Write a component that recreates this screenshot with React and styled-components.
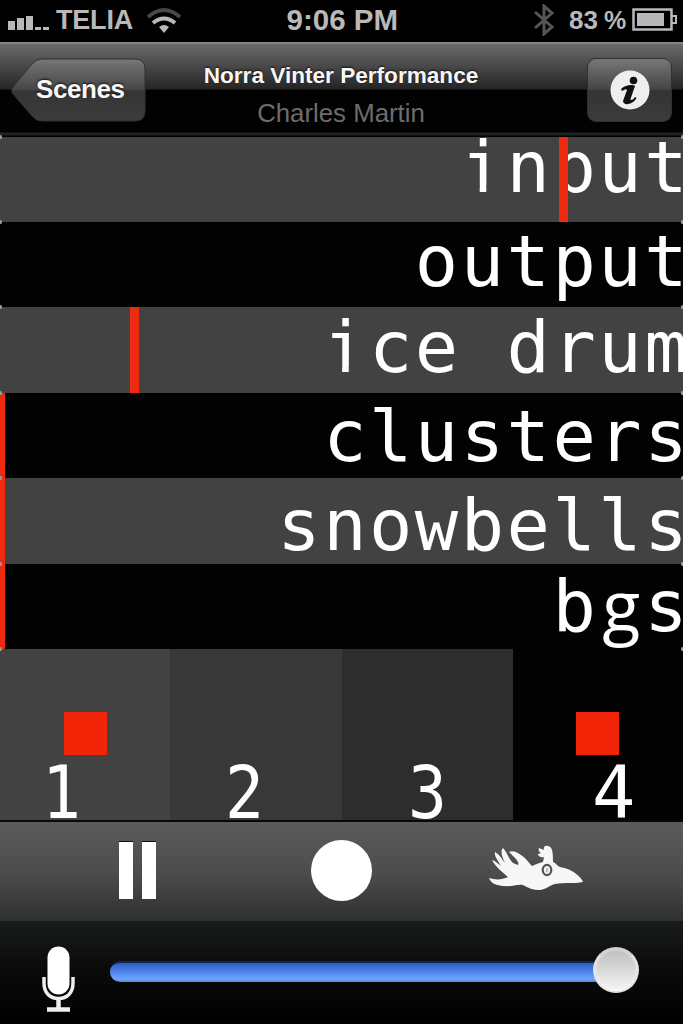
import React from 'react';
import styled, { createGlobalStyle } from 'styled-components';

const Global = createGlobalStyle`
  * { box-sizing: border-box; }
  body { margin: 0; background: #000; }
`;

const Screen = styled.main`
  width: 683px;
  height: 1024px;
  overflow: hidden;
  display: flex;
  flex-direction: column;
  background: #000;
  font-family: "Liberation Sans", Arial, sans-serif;
`;

const StatusBar = styled.header`
  height: 42px;
  flex: none;
  display: grid;
  grid-template-columns: 1fr auto 1fr;
  align-items: center;
  padding: 0 5px 2px 8px;
  color: #b9b9b9;
  font-size: 27px;
  font-weight: bold;
`;

const StatusGroup = styled.div`
  display: flex;
  align-items: center;
  justify-content: ${(p) => (p.$end ? 'flex-end' : 'flex-start')};
  svg { display: block; flex: none; }
`;

const StatusText = styled.span`
  display: block;
  white-space: nowrap;
  font-size: ${(p) => p.$size}px;
  width: ${(p) => p.$width}px;
  margin-left: ${(p) => p.$gap || 0}px;
  letter-spacing: ${(p) => p.$track || 0}px;
`;

const NavBar = styled.nav`
  height: 95px;
  flex: none;
  display: grid;
  grid-template-columns: 137px 1fr 85px;
  align-items: start;
  padding: 14px 11px 0 9px;
  border-top: 2px solid #858585;
  border-bottom: 1px solid #000;
  background: linear-gradient(#6a6a6a 0, #252525 45px, #020202 46px, #020202 88px, #242424 89px, #202020 91px, #000 92px);
`;

const BackButton = styled.button`
  width: 137px;
  height: 64px;
  padding: 0;
  border: 0;
  background: none;
  display: grid;
  svg, span { grid-area: 1 / 1; }
  span {
    align-self: center;
    padding: 0 0 2px 27px;
    text-align: left;
    color: #f7f7f7;
    font: bold 26px/30px "Liberation Sans", Arial, sans-serif;
    letter-spacing: -0.4px;
    text-shadow: 0 -1px 2px #111;
  }
`;

const Titles = styled.div`
  display: flex;
  flex-direction: column;
  align-items: center;
  padding: 4px 51px 0 0;
  white-space: nowrap;
`;

const Title = styled.h1`
  margin: 0;
  color: #f7f7f7;
  font-size: 22.6px;
  line-height: 28px;
  text-shadow: 0 -1px 2px #111;
`;

const Subtitle = styled.p`
  margin: 8px 0 0;
  color: #6c6c6c;
  font-size: 25.8px;
  line-height: 30px;
`;

const InfoButton = styled.button`
  width: 85px;
  height: 64px;
  padding: 0;
  display: grid;
  place-items: center;
  border: 1px solid #303030;
  border-radius: 9px;
  background: linear-gradient(#787878, #454545 48%, #333 52%, #3c3c3c);
`;

const Track = styled.section`
  height: ${(p) => p.$height}px;
  flex: none;
  position: relative;
  display: flex;
  justify-content: flex-end;
  background: ${(p) => (p.$lit ? '#424242' : '#020202')};
`;

const TrackName = styled.span`
  margin: ${(p) => p.$shift}px -7px 0 0;
  color: #fff;
  font-family: "DejaVu Sans Mono", monospace;
  font-size: 72px;
  line-height: 85px;
  letter-spacing: 2.5px;
  white-space: pre;
`;

/* The dotted i loses the foot on both sides of its stem. */
const FootlessI = styled.span`
  display: inline-block;
  line-height: 85px;
  clip-path: polygon(0 0, 100% 0, 100% 61px, 25.6px 61px, 25.6px 100%, 19px 100%, 19px 61px, 0 61px);
`;

/* Two-storey g, centred in one monospace cell. */
const LoopG = styled.span`
  display: inline-block;
  width: 45.85px;
  text-align: center;
  font-family: "Open Sans", sans-serif;
  font-size: 70px;
  line-height: 85px;
  letter-spacing: 0;
`;

const Level = styled.i`
  position: absolute;
  top: 0;
  bottom: 0;
  left: ${(p) => p.$at}px;
  width: ${(p) => p.$width}px;
  background: #ee2a10;
`;

const Corner = styled.i`
  position: absolute;
  z-index: 2;
  top: -2px;
  width: 3px;
  height: 4px;
  border-radius: 2px;
  background: #999;
  ${(p) => (p.$right ? 'right: -1px;' : 'left: -1px;')}
`;

const Pads = styled.section`
  height: 171px;
  flex: none;
  position: relative;
  display: grid;
  grid-template-columns: 170px 172px 171px 170px;
`;

const Pad = styled.div`
  position: relative;
  display: flex;
  background: ${(p) => p.$tone};
  padding: 104px 0 0 ${(p) => p.$inset}px;
  color: #fff;
  font: 73.5px/79px "DejaVu Sans Mono", monospace;
`;

const Digit = styled.span`
  display: block;
  height: 67px;
  transform: scaleX(${(p) => p.$squeeze});
  transform-origin: left;
`;

const Toggle = styled.i`
  position: absolute;
  top: 63px;
  left: ${(p) => p.$x}px;
  width: 43px;
  height: 43px;
  background: #f32508;
`;

const Transport = styled.section`
  height: 101px;
  flex: none;
  display: flex;
  align-items: flex-start;
  border-top: 2px solid #080808;
  background: linear-gradient(#5b5b5b, #4b4c4d 52%, #3c3c3d 78%, #303131);
  padding-left: 119px;
`;

const PauseIcon = styled.div`
  margin-top: 20px;
  width: 37px;
  height: 57px;
  display: flex;
  justify-content: space-between;
  &::before, &::after {
    content: "";
    width: 14px;
    background: #fff;
    box-shadow: 0 -1px 0 #111;
  }
`;

const RecordIcon = styled.div`
  width: 61px;
  height: 61px;
  margin: 18px 117px 0 155px;
  border-radius: 50%;
  background: #fff;
`;

const BirdIcon = styled.svg`
  display: block;
  flex: none;
  margin-top: 22px;
`;

const VolumeBar = styled.footer`
  flex: 1;
  display: flex;
  align-items: flex-start;
  background: linear-gradient(#191b1b, #0b0b0b 45%, #000);
  padding: 24px 44px 0 41px;
  svg { display: block; flex: none; }
`;

const Slider = styled.div`
  flex: 1;
  display: flex;
  align-items: center;
  height: 49px;
  margin-left: 34px;
`;

const Fill = styled.div`
  flex: 1;
  height: 21px;
  margin: 4px -12px 0 0;
  border-radius: 10px;
  border-top: 2px solid #102552;
  background: linear-gradient(#2d5bbb, #4d83eb 45%, #6fa4ff 85%, #5587da);
`;

const Knob = styled.div`
  width: 46px;
  height: 46px;
  border-radius: 50%;
  border: 2px solid #e4e4e4;
  border-top-color: #d0d0d0;
  background: linear-gradient(#bdbdbd, #dcdcdc 55%, #f6f6f6);
  box-shadow: inset 0 0 3px #fff;
`;

const tracks = [
  { name: 'input', height: 85, shift: -12.5, level: 559 },
  { name: 'output', height: 85, shift: -3.5 },
  { name: 'ice drum', height: 86, shift: -2, level: 130 },
  { name: 'clusters', height: 85, shift: 0.5, level: 0 },
  { name: 'snowbells', height: 86, shift: 5, level: 0 },
  { name: 'bgs', height: 85, shift: -2, level: 0 },
];

const pads = [
  { label: '1', tone: '#424242', inset: 42, squeeze: 0.88, toggle: 64 },
  { label: '2', tone: '#383838', inset: 55, squeeze: 0.88 },
  { label: '3', tone: '#2d2d2d', inset: 66, squeeze: 0.88 },
  { label: '4', tone: '#020202', inset: 79, squeeze: 0.98, toggle: 63 },
];

const Lettering = ({ text }) =>
  [...text].map((c, i) => {
    if (c === 'i') return <FootlessI key={i}>i</FootlessI>;
    if (c === 'g') return <LoopG key={i}>g</LoopG>;
    return c;
  });

const Signal = () => (
  <svg width="43" height="20" fill="#b9b9b9">
    <rect x="0" y="11" width="7" height="9" />
    <rect x="9" y="8" width="7" height="12" />
    <rect x="18" y="6" width="7" height="14" />
    <rect x="27" y="17" width="6" height="3" />
    <rect x="35" y="17" width="6" height="3" />
  </svg>
);

const Wifi = () => (
  <svg width="36" height="28" viewBox="0 0 36 28" fill="none" strokeWidth="4">
    <path d="M2 11 Q18 -3 34 11" stroke="#484848" />
    <path d="M7 17 Q18 8 29 17" stroke="#b9b9b9" />
    <path d="M13 21 Q18 17 23 21 L18 27Z" fill="#b9b9b9" />
  </svg>
);

const Bluetooth = () => (
  <svg width="22" height="32" viewBox="0 0 22 32" fill="none" stroke="#555" strokeWidth="3">
    <path d="M2 8 L19 23 L11 30 V2 L19 9 L2 24" />
  </svg>
);

const Battery = () => (
  <svg width="46" height="24" viewBox="0 0 46 24">
    <rect x="1.5" y="1.5" width="38" height="20" fill="none" stroke="#b9b9b9" strokeWidth="2.5" />
    <rect x="5" y="5" width="27" height="13" fill="#b9b9b9" />
    <path d="M40 8 h4 v7 h-4" fill="none" stroke="#b9b9b9" strokeWidth="2" />
  </svg>
);

const Bird = () => (
  <BirdIcon width="96" height="50" viewBox="0 0 96 50">
    <path
      fill="#f7f7f7"
      d="M0 34 C6 36 13 36 19 33 C13 28 6 22 3 16 C7 17 9 20 12 22 C9 17 5 12 6 8 C10 10 13 15 16 19 C13 13 11 7 14 4 C18 8 19 14 24 19 L29 21 C31 18 25 13 20 8 C24 6 29 9 32 11 C37 14 39 18 43 22 C47 20 50 19 54 18 L55 13 C52 14 49 12 49 10 L52 9 C50 8 49 6 50 4 L55 6 C54 3 56 1 59 2 C63 3 64 6 64 18 C67 19 68 22 71 23 C77 24 82 26 86 29 C90 32 93 35 94 38 C85 40 75 38 66 40 C61 41 58 45 51 46 C44 46 39 44 34 41 C28 40 22 43 16 42 C9 42 2 40 0 34Z"
    />
    <ellipse cx="58" cy="26" rx="4.3" ry="5.1" fill="#eee" stroke="#535353" strokeWidth="2.2" />
    <path d="M58 24 v4" stroke="#aaa" strokeWidth="1.3" />
  </BirdIcon>
);

const Microphone = () => (
  <svg width="35" height="68" viewBox="0 0 35 68">
    <rect x="6.5" y="1.5" width="22" height="48" rx="11" fill="#fff" />
    <path d="M3 32 V38 C3 48 9 53.5 17.5 53.5 S32 48 32 38 V32" fill="none" stroke="#eee" strokeWidth="3.5" />
    <path d="M17.5 54 V64 M6 64.5 H29" fill="none" stroke="#eee" strokeWidth="4.5" />
  </svg>
);

export default function App() {
  return (
    <Screen>
      <Global />
      <StatusBar>
        <StatusGroup>
          <Signal />
          <StatusText $size={27} $width={90} $gap={5} $track={-0.2}>TELIA</StatusText>
          <Wifi />
        </StatusGroup>
        <StatusText $size={29.5} $width={113} $track={0}>9:06 PM</StatusText>
        <StatusGroup $end>
          <Bluetooth />
          <StatusText $size={26} $width={35} $gap={14}>83</StatusText>
          <StatusText $size={25} $width={28}>%</StatusText>
          <Battery />
        </StatusGroup>
      </StatusBar>

      <NavBar>
        <BackButton>
          <svg width="137" height="64">
            <defs>
              <linearGradient id="back" x2="0" y2="1">
                <stop stopColor="#777" />
                <stop offset=".49" stopColor="#464646" />
                <stop offset=".52" stopColor="#343434" />
                <stop offset="1" stopColor="#3d3d3d" />
              </linearGradient>
            </defs>
            <path
              d="M33 1 H126 Q136 1 136 11 V53 Q136 63 126 63 H33 Q27 63 23 58 L4 36 Q1 32 4 29 L23 6 Q27 1 33 1Z"
              fill="url(#back)"
              stroke="#303030"
            />
          </svg>
          <span>Scenes</span>
        </BackButton>
        <Titles>
          <Title>Norra Vinter Performance</Title>
          <Subtitle>Charles Martin</Subtitle>
        </Titles>
        <InfoButton>
          <svg width="40" height="40">
            <circle cx="20" cy="20" r="19.5" fill="#eee" />
            <circle cx="23.5" cy="10.5" r="3.8" fill="#111" />
            <path d="M11 19 C15 15 22 14 25 16 L20.5 29 C20.5 31 23 30 25 27 L26.5 28 C23 35 13 36 13 31 L17 20 C16 18 14 20 12 21Z" fill="#111" />
          </svg>
        </InfoButton>
      </NavBar>

      {tracks.map((t, i) => (
        <Track key={t.name} $height={t.height} $lit={i % 2 === 0}>
          <TrackName $shift={t.shift}><Lettering text={t.name} /></TrackName>
          {t.level !== undefined && <Level $at={t.level} $width={t.level ? 9 : 5} />}
          <Corner />
          <Corner $right />
        </Track>
      ))}

      <Pads>
        {pads.map((p) => (
          <Pad key={p.label} $tone={p.tone} $inset={p.inset}>
            <Digit $squeeze={p.squeeze}>{p.label}</Digit>
            {p.toggle && <Toggle $x={p.toggle} />}
          </Pad>
        ))}
        <Corner />
        <Corner $right />
      </Pads>

      <Transport>
        <PauseIcon />
        <RecordIcon />
        <Bird />
      </Transport>

      <VolumeBar>
        <Microphone />
        <Slider>
          <Fill />
          <Knob />
        </Slider>
      </VolumeBar>
    </Screen>
  );
}
